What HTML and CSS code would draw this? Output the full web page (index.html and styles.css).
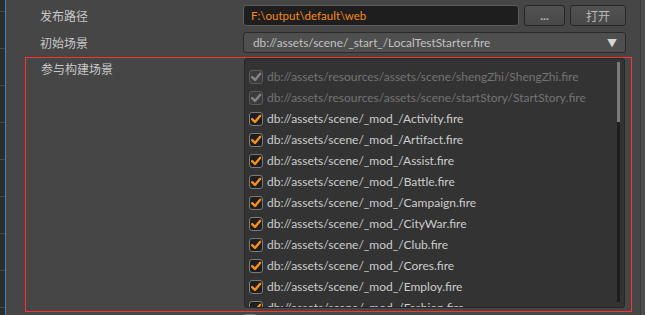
FILE: index.html
```html
<!DOCTYPE html>
<html lang="en">
<head>
    <meta charset="UTF-8">
    <title>构建发布</title>
    <link rel="stylesheet" href="styles.css">
</head>
<body>
    <div class="app">
        <div class="side">
            <div class="side-row first"></div>
            <div class="side-row"></div>
            <div class="side-row"></div>
            <div class="side-row"></div>
            <div class="side-row"></div>
            <div class="side-row"></div>
            <div class="side-row"></div>
            <div class="side-row"></div>
            <div class="side-row"></div>
        </div>

        <div class="panel">
            <div class="row row-path">
                <div class="label">发布路径</div>
                <div class="field">
                    <div class="path-input">F:\output\default\web</div>
                    <button class="btn btn-dots">...</button>
                    <button class="btn btn-open">打开</button>
                </div>
            </div>

            <div class="row row-start">
                <div class="label">初始场景</div>
                <div class="field">
                    <div class="select">
                        <span>db://assets/scene/_start_/LocalTestStarter.fire</span>
                        <span class="arrow">&#9660;</span>
                    </div>
                </div>
            </div>

            <div class="row row-scenes">
                <div class="label">参与构建场景</div>
                <div class="field">
                    <div class="scene-list">
                        <ul id="sceneItems"></ul>
                        <div class="scrollbar"><div class="thumb"></div></div>
                    </div>
                </div>
            </div>

            <div class="row row-next">
                <div class="label"></div>
                <div class="field">
                    <span class="check"></span>
                    <span class="next-text">Android</span>
                </div>
            </div>
        </div>

        <div class="edge"></div>
    </div>

    <script>
        const scenes = [
            { path: 'db://assets/resources/assets/scene/shengZhi/ShengZhi.fire', disabled: true },
            { path: 'db://assets/resources/assets/scene/startStory/StartStory.fire', disabled: true },
            { path: 'db://assets/scene/_mod_/Activity.fire' },
            { path: 'db://assets/scene/_mod_/Artifact.fire' },
            { path: 'db://assets/scene/_mod_/Assist.fire' },
            { path: 'db://assets/scene/_mod_/Battle.fire' },
            { path: 'db://assets/scene/_mod_/Campaign.fire' },
            { path: 'db://assets/scene/_mod_/CityWar.fire' },
            { path: 'db://assets/scene/_mod_/Club.fire' },
            { path: 'db://assets/scene/_mod_/Cores.fire' },
            { path: 'db://assets/scene/_mod_/Employ.fire' },
            { path: 'db://assets/scene/_mod_/Fashion.fire' }
        ];

        const tick = '<svg viewBox="0 0 12 12" width="12" height="12"><polyline points="2.2,6.2 5,9 10.2,2.8" fill="none" stroke-width="2.4" stroke-linecap="round" stroke-linejoin="round"/></svg>';

        const list = document.getElementById('sceneItems');
        scenes.forEach(scene => {
            const li = document.createElement('li');
            li.className = scene.disabled ? 'scene disabled' : 'scene';
            li.innerHTML = '<span class="check">' + tick + '</span><span class="name">' + scene.path + '</span>';
            list.appendChild(li);
        });
    </script>
</body>
</html>
```

FILE: styles.css
```css
body {
    margin: 0;
    padding: 0;
    background-color: #464646;
    color: #c8c8c8;
    font-family: Lato, "Noto Sans CJK SC", sans-serif;
    font-size: 12px;
    overflow: hidden;
}

.app {
    display: flex;
    height: 315px;
    overflow: hidden;
}

.side {
    width: 5px;
    background-color: #2c2c2c;
    border-right: 1px solid #2f86d6;
    flex-shrink: 0;
}

.side-row {
    height: 36px;
    border-bottom: 1px solid #484848;
}

.side-row.first {
    height: 11px;
}

.panel {
    flex: 1;
    padding: 5px 8px 0 19px;
}

.edge {
    width: 4px;
    border-left: 1px solid #3a3a3a;
    background-color: #4d4d4d;
}

.row {
    display: flex;
    padding: 0 6px 0 15px;
}

.label {
    width: 203px;
    flex-shrink: 0;
    line-height: 21px;
    font-family: "Noto Sans CJK SC", sans-serif;
}

.field {
    flex: 1;
    display: flex;
    align-items: flex-start;
}

/* path row */
.row-path {
    height: 21px;
    margin-bottom: 6px;
}

.path-input {
    flex: 1;
    height: 19px;
    line-height: 19px;
    padding: 0 7px;
    background-color: #1e1e1e;
    border: 1px solid #5c5c5c;
    border-radius: 3px;
    color: #f78a1a;
    font-size: 11.5px;
}

.btn {
    height: 21px;
    margin-left: 5px;
    padding: 0;
    background: linear-gradient(#525252, #484848);
    border: 1px solid #262626;
    border-radius: 3px;
    color: #bababa;
    font-family: Lato, "Noto Sans CJK SC", sans-serif;
    font-size: 12px;
    cursor: pointer;
}

.btn-dots {
    width: 41px;
    line-height: 10px;
    font-weight: bold;
}

.btn-open {
    width: 56px;
}

/* start scene row */
.row-start {
    height: 21px;
    margin-bottom: 4px;
}

.select {
    flex: 1;
    height: 19px;
    display: flex;
    align-items: center;
    justify-content: space-between;
    padding: 0 8px 0 9px;
    background-color: #4f4f4f;
    border: 1px solid #2a2a2a;
    border-radius: 3px;
    color: #c2c2c2;
    font-size: 11.8px;
}

.arrow {
    font-size: 10px;
    color: #d6d6d6;
}

/* scenes list */
.row-scenes {
    border: 1px solid #ff3030;
    padding-bottom: 3px;
    height: 250px;
}

.row-scenes .label {
    line-height: 20px;
    padding-top: 1px;
}

.scene-list {
    position: relative;
    flex: 1;
    height: 248px;
    background-color: #333333;
    border: 1px solid #262626;
    border-radius: 3px;
    overflow: hidden;
}

.scene-list ul {
    list-style: none;
    margin: 0;
    padding: 7px 0 0 4px;
}

.scene {
    display: flex;
    align-items: center;
    height: 21px;
    color: #cdcdcd;
    font-size: 12px;
}

.check {
    width: 12px;
    height: 12px;
    margin-right: 4px;
    display: flex;
    align-items: center;
    justify-content: center;
    background-color: #1f1f1f;
    border: 1px solid #7a7a7a;
    border-radius: 3px;
    flex-shrink: 0;
}

.check svg {
    stroke: #f7901e;
}

.scene.disabled {
    color: #747474;
}

.scene.disabled .check {
    background-color: #3b3b3b;
    border-color: #5a5a5a;
}

.scene.disabled .check svg {
    stroke: #858585;
}

.scrollbar {
    position: absolute;
    top: 3px;
    right: 4px;
    bottom: 5px;
    width: 3px;
    background-color: #1e1e1e;
}

.thumb {
    height: 60px;
    background-color: #7a7a7a;
}

/* partially visible row below */
.row-next {
    margin-top: 1px;
}

.row-next .check {
    margin-top: 1px;
}

.next-text {
    margin-left: 3px;
    line-height: 14px;
}
```
